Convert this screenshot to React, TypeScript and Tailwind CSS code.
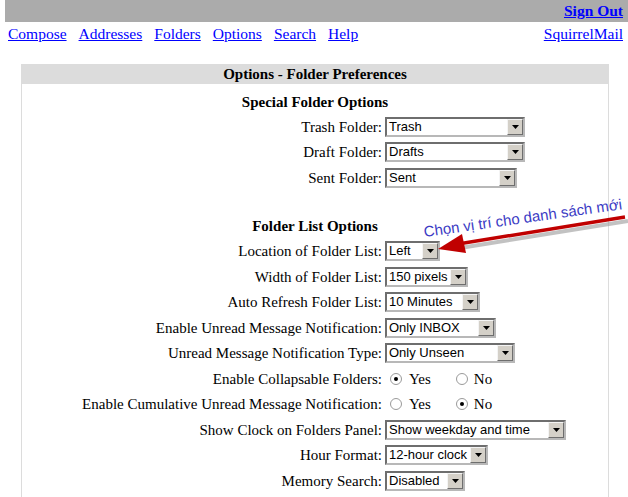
import React from 'react';

type Row =
    | { kind: 'select'; label: string; value: string; width: number }
    | { kind: 'radio'; label: string; yes: boolean };

const specialRows: Row[] = [
    { kind: 'select', label: 'Trash Folder:', value: 'Trash', width: 140 },
    { kind: 'select', label: 'Draft Folder:', value: 'Drafts', width: 140 },
    { kind: 'select', label: 'Sent Folder:', value: 'Sent', width: 132 },
];

const listRows: Row[] = [
    { kind: 'select', label: 'Location of Folder List:', value: 'Left', width: 55 },
    { kind: 'select', label: 'Width of Folder List:', value: '150 pixels', width: 83 },
    { kind: 'select', label: 'Auto Refresh Folder List:', value: '10 Minutes', width: 95 },
    { kind: 'select', label: 'Enable Unread Message Notification:', value: 'Only INBOX', width: 111 },
    { kind: 'select', label: 'Unread Message Notification Type:', value: 'Only Unseen', width: 130 },
    { kind: 'radio', label: 'Enable Collapsable Folders:', yes: true },
    { kind: 'radio', label: 'Enable Cumulative Unread Message Notification:', yes: false },
    { kind: 'select', label: 'Show Clock on Folders Panel:', value: 'Show weekday and time', width: 181 },
    { kind: 'select', label: 'Hour Format:', value: '12-hour clock', width: 103 },
    { kind: 'select', label: 'Memory Search:', value: 'Disabled', width: 80 },
];

const navLinks = ['Compose', 'Addresses', 'Folders', 'Options', 'Search', 'Help'];

const FakeSelect: React.FC<{ value: string; width: number }> = ({ value, width }) => (
    <div
        className="flex h-[20px] items-stretch border-2 border-t-[#6e6e6e] border-l-[#6e6e6e] border-r-[#b8b8b8] border-b-[#b8b8b8] bg-white"
        style={{ width }}
    >
        <span className="flex-1 overflow-hidden whitespace-nowrap pl-[2px] font-['Liberation_Sans',Arial,sans-serif] text-[13px] leading-[16px] text-black">
            {value}
        </span>
        <span className="flex w-[16px] items-center justify-center border border-t-[#f4f4f4] border-l-[#f4f4f4] border-r-[#6e6e6e] border-b-[#6e6e6e] bg-[#d4d0c8]">
            <svg width="7" height="4" viewBox="0 0 7 4">
                <path d="M0 0h7L3.5 4z" fill="#000" />
            </svg>
        </span>
    </div>
);

const Radio: React.FC<{ checked: boolean }> = ({ checked }) => (
    <span className="flex h-[12px] w-[12px] items-center justify-center rounded-full border border-[#9a9a9a] bg-white">
        {checked && <span className="h-[4px] w-[4px] rounded-full bg-black" />}
    </span>
);

const OptionRow: React.FC<{ row: Row }> = ({ row }) => (
    <div className="flex h-[25.5px] items-center">
        <div className="w-[363px] shrink-0 pr-[3px] text-right whitespace-nowrap">{row.label}</div>
        {row.kind === 'select' ? (
            <FakeSelect value={row.value} width={row.width} />
        ) : (
            <div className="flex items-center">
                <span className="ml-[5px]"><Radio checked={row.yes} /></span>
                <span className="ml-[7px]">Yes</span>
                <span className="ml-[25px]"><Radio checked={!row.yes} /></span>
                <span className="ml-[6px]">No</span>
            </div>
        )}
    </div>
);

const App: React.FC = () => {
    return (
        <div className="relative h-[497px] w-[628px] overflow-hidden bg-white font-['Liberation_Serif','Times_New_Roman',serif] text-[15px] text-black">
            {/* top bar */}
            <div className="ml-[5px] flex h-[22px] items-center justify-end bg-[#ababab] pr-[5px]">
                <a className="font-bold text-[15.5px] text-[#0000ff] underline">Sign Out</a>
            </div>

            {/* nav */}
            <div className="flex h-[24px] items-center justify-between pl-[8px] pr-[5px] text-[15.5px]">
                <div className="flex gap-[12px]">
                    {navLinks.map(l => (
                        <a key={l} className="text-[#0000ff] underline">{l}</a>
                    ))}
                </div>
                <a className="text-[#0000ff] underline">SquirrelMail</a>
            </div>

            {/* options panel */}
            <div className="ml-[21px] mt-[18px] w-[588px] border-x border-[#dcdcdc]">
                <div className="flex h-[20px] items-center justify-center bg-[#dcdcdc] font-bold">
                    Options - Folder Preferences
                </div>
                <div className="pb-[20px]">
                    <div className="flex h-[30px] items-end justify-center pb-[1px] font-bold">
                        Special Folder Options
                    </div>
                    {specialRows.map(r => (
                        <OptionRow key={r.label} row={r} />
                    ))}
                    <div className="flex h-[48px] items-end justify-center pb-[1px] font-bold">
                        Folder List Options
                    </div>
                    {listRows.map(r => (
                        <OptionRow key={r.label} row={r} />
                    ))}
                </div>
            </div>

            {/* annotation */}
            <svg className="absolute left-[400px] top-[190px]" width="228" height="70" viewBox="0 0 228 70">
                <line x1="228" y1="31" x2="60" y2="58" stroke="#9a9a9a" strokeWidth="4" opacity="0.6" />
                <line x1="225" y1="27" x2="58" y2="54" stroke="#c00000" strokeWidth="3.5" />
                <path d="M38 59 L62 44 L66 63 Z" fill="#c00000" />
            </svg>
            <div className="absolute left-[425px] top-[223px] origin-bottom-left -rotate-[8deg] whitespace-nowrap font-['Liberation_Sans',Arial,sans-serif] text-[15px] leading-[18px] text-[#3b3bc4]">
                Chọn vị trí cho danh sách mới
            </div>
        </div>
    );
};

export default App;
